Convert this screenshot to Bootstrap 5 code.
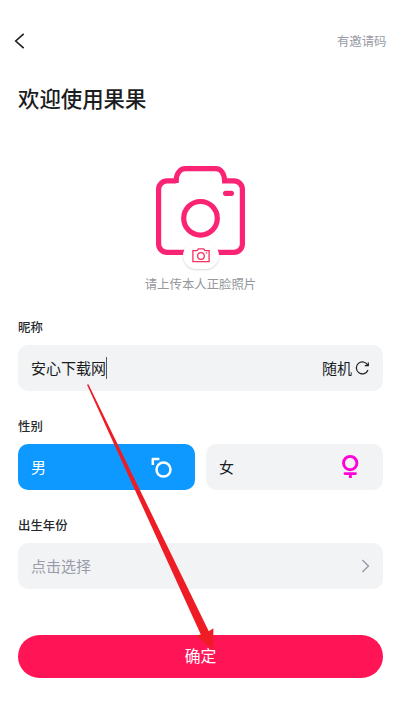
<!DOCTYPE html>
<html lang="zh-CN">
<head>
<meta charset="utf-8">
<meta name="viewport" content="width=device-width, initial-scale=1">
<title>欢迎使用果果</title>
<link rel="stylesheet" href="https://cdn.jsdelivr.net/npm/bootstrap@5.3.0/dist/css/bootstrap.min.css">
<style>
  body { font-family: "Noto Sans CJK SC", sans-serif; color: #1b1d1f; background: #fff; }
  .screen { width: 401px; height: 713px; overflow: hidden; }
  .topbar { height: 82px; padding-right: 14.5px; padding-left: 13px; }
  .invite { font-size: 12.4px; color: #9a9ca5; }
  .page-title { font-size: 21.4px; font-weight: 500; line-height: 32px; }
  .main-col { padding: 0 18px; }
  .avatar { margin-top: 52px; height: 104px; }
  .avatar-hint { font-size: 12.4px; line-height: 18px; color: #96979b; margin-top: 5px; }
  .avatar-edit { width: 36px; height: 27px; border-radius: 14px; left: 164.5px; bottom: 1px; box-shadow: 0 1px 2px rgba(0,0,0,.16); }
  .avatar-edit svg { margin-bottom: 1px; }
  .field-label { font-size: 12.4px; font-weight: 500; line-height: 18px; margin: 26px 0 9px; color: #26282b; }
  .avatar-hint + .field-label { margin-top: 25px; }
  .field { height: 46px; border-radius: 10px; background: #f1f3f5; padding: 0 13px; font-size: 15px; }
  .field-male { background: #0d99ff; color: #fff; }
  .caret { width: 1px; height: 22px; background: #55585c; }
  .shuffle { gap: 3px; }
  .placeholder-text { color: #999ba8; }
  .gender-row { gap: 11px; }
  .gender-row .field { flex: 1 1 0; min-width: 0; }
  .submit { height: 43px; margin-top: 45.5px; background: #ff1556; color: #fff; font-size: 15.8px; }
  .submit:hover { background: #ff1556; color: #fff; }
  svg { display: block; flex: none; }
</style>
<script src="https://cdn.jsdelivr.net/npm/bootstrap@5.3.0/dist/js/bootstrap.bundle.min.js"></script>
</head>
<body>
<div class="screen position-relative">
  <header class="topbar d-flex align-items-center justify-content-between">
    <svg width="14" height="18" viewBox="0 0 14 18" fill="none" stroke="#1b1d1f" stroke-width="1.6"><path d="M10.7 1.8 2.7 9l8 7.2"/></svg>
    <span class="invite">有邀请码</span>
  </header>
  <main class="main-col">
    <h1 class="page-title m-0">欢迎使用果果</h1>

    <div class="avatar position-relative">
      <svg class="mx-auto" width="89" height="89" viewBox="0 0 89 89" fill="none" stroke="#fb2374" stroke-width="5.2">
        <path d="M20.2 17v-2.2h-9.1A8.5 8.5 0 0 0 2.6 23.3v54.6a8.5 8.5 0 0 0 8.5 8.5h66.8a8.5 8.5 0 0 0 8.5-8.5V23.3a8.5 8.5 0 0 0-8.5-8.5h-9.3C68.3 7.5 65 2.6 59.5 2.6h-30C24 2.6 20.2 7.5 20.2 14.8z"/>
        <circle cx="44.5" cy="52.3" r="16.8"/>
        <rect x="67" y="24.7" width="11" height="5.2" rx="2.6" fill="#fb2374" stroke="none"/>
      </svg>
      <div class="avatar-edit position-absolute bg-white d-flex align-items-center justify-content-center">
        <svg width="18" height="15" viewBox="0 0 18 15" fill="none" stroke="#f82f5f" stroke-width="1.3"><path d="M.9 2.7h4.2L6.4.9h5.2l1.3 1.8h4.2v11H.9z"/><circle cx="9" cy="8" r="3.3"/><path d="M13.8 4.9h1.3"/></svg>
      </div>
    </div>
    <p class="avatar-hint text-center mb-0">请上传本人正脸照片</p>

    <div class="field-label">昵称</div>
    <div class="field d-flex align-items-center">
      <span>安心下载网</span><span class="caret"></span>
      <div class="shuffle ms-auto d-flex align-items-center">
        <span>随机</span>
        <svg width="15" height="14" viewBox="0 0 15 14" fill="none" stroke="#1b1d1f" stroke-width="1.2"><path d="M12.7 4.1A6 6 0 1 0 13 9"/><path d="M9.8 4.6h3.5V1.5"/></svg>
      </div>
    </div>

    <div class="field-label">性别</div>
    <div class="gender-row d-flex">
      <div class="field field-male d-flex align-items-center">
        <span>男</span>
        <svg class="ms-auto" width="32" height="24" viewBox="0 0 32 24" fill="none" stroke="#fff" stroke-width="2.5"><circle cx="13.5" cy="14.6" r="7"/><path d="M2.8 10V4H9.4" stroke-linejoin="round"/></svg>
      </div>
      <div class="field d-flex align-items-center">
        <span>女</span>
        <svg class="ms-auto" width="30" height="26" viewBox="0 0 30 26" fill="none" stroke="#ff00d8" stroke-width="2.9"><circle cx="10.2" cy="9.1" r="6.7"/><path d="M5 19.6h10.4" stroke-linecap="round"/><path d="M10.4 20v4"/></svg>
      </div>
    </div>

    <div class="field-label">出生年份</div>
    <div class="field d-flex align-items-center justify-content-between">
      <span class="placeholder-text">点击选择</span>
      <svg width="9" height="14" viewBox="0 0 9 14" fill="none" stroke="#999ba8" stroke-width="1.4"><path d="M1.4 1.1 7.5 7l-6.1 5.9"/></svg>
    </div>

    <button type="button" class="submit btn rounded-pill border-0 w-100 p-0 d-flex align-items-center justify-content-center">确定</button>
  </main>

  <!-- pointer from the nickname field to the confirm button -->
  <svg class="position-absolute top-0 start-0 pe-none" width="401" height="713" viewBox="0 0 401 713"><path fill="#ee1c25" d="M87 384.8 88.4 384.3 208.8 631.3 213.4 628.3 213.2 649.8 195.7 635.6 200.8 634.5z"/></svg>
</div>
</body>
</html>
